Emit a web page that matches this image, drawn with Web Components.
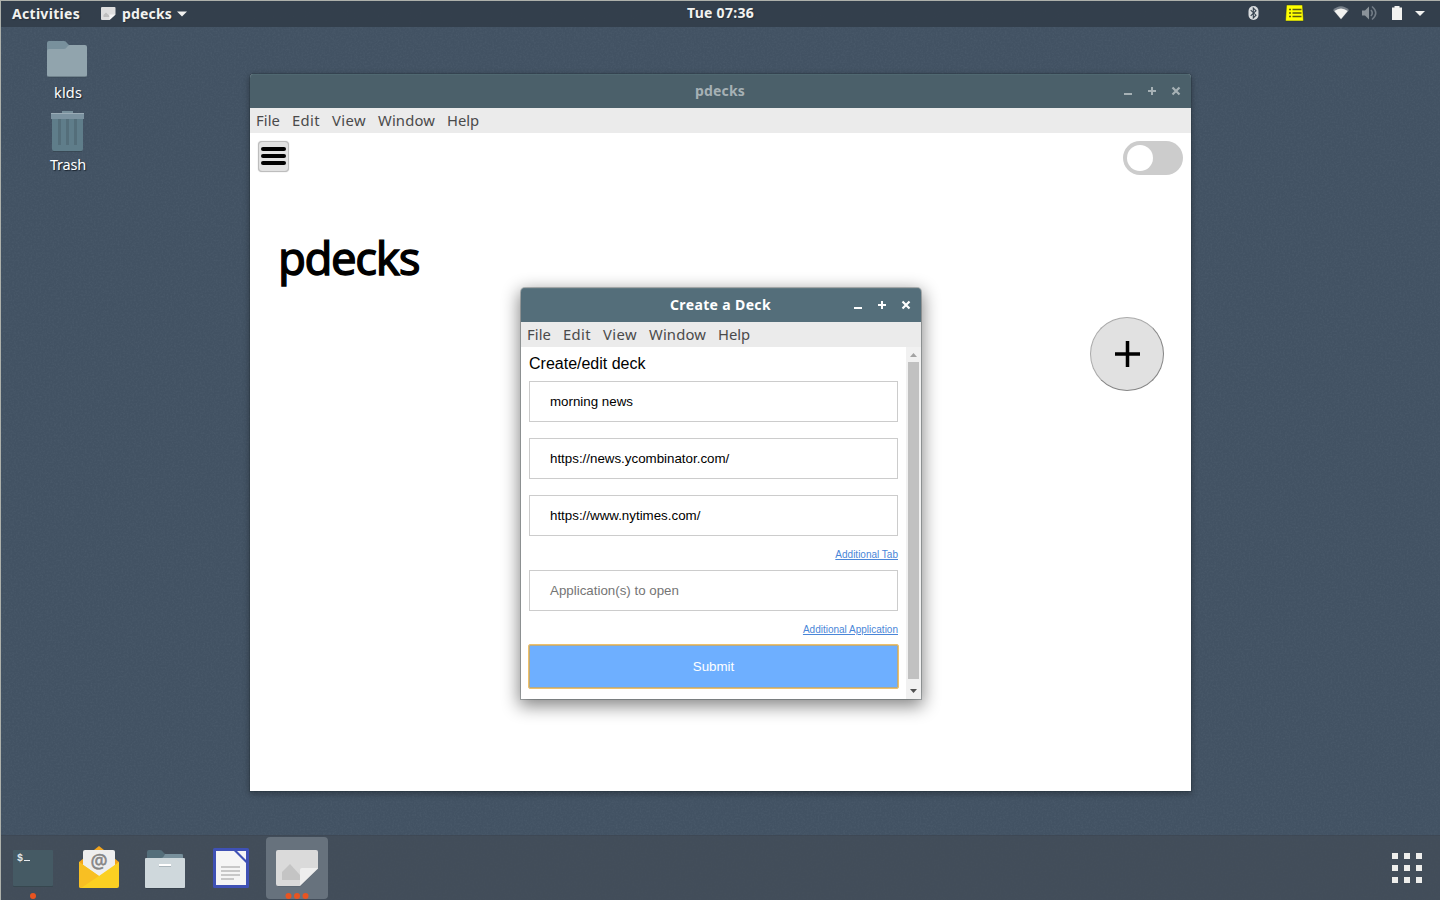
<!DOCTYPE html>
<html lang="en">
<head>
<meta charset="utf-8">
<title>pdecks desktop</title>
<style>
html,body{margin:0;width:1440px;height:900px;overflow:hidden;background:#435365}
</style>
</head>
<body>
<desk-top></desk-top>

<script>
const UI = '"Noto Sans","Open Sans",sans-serif';
function define(name, html, setup) {
  customElements.define(name, class extends HTMLElement {
    constructor() {
      super();
      this.attachShadow({mode: 'open'}).innerHTML = html;
    }
    connectedCallback() { if (setup) setup(this, this.shadowRoot); }
  });
}

/* Whole screen: top bar, work area, dock */
define('desk-top', `<style>
:host{display:flex;flex-direction:column;box-sizing:border-box;width:1440px;height:900px;position:relative;background:#425263;font-family:${UI}}
.grain{position:absolute;inset:0;width:100%;height:100%}
main{flex:1;position:relative}
.icons{display:flex;flex-direction:column;padding:12px 0 0 32px;width:72px}
app-window{position:absolute}
.edge{position:absolute;inset:0;border-top:1px solid #aeb1ab;border-left:1px solid #aeb1ab;pointer-events:none}
</style>
<svg class="grain"><filter id="g" x="0" y="0" width="100%" height="100%"><feTurbulence type="fractalNoise" baseFrequency=".55" numOctaves="2" seed="4"/><feColorMatrix values="0 0 0 0 .6  0 0 0 0 .7  0 0 0 0 .8  .5 0 0 0 -.19"/></filter><rect width="1440" height="900" filter="url(#g)" opacity=".2"/></svg>
<top-bar></top-bar>
<main>
  <div class="icons">
    <desk-icon><svg slot="art" width="72" height="42" viewBox="0 0 72 42"><path d="M15 4q0-2 2-2h15q2 0 3 2l2 2h15v8H15z" fill="#78909c"/><path d="M15 12q0-2 2-2h15q2 0 3-2l1-1q1-1 2-1h15q2 0 2 2v28q0 2-2 2H17q-2 0-2-2z" fill="#91a4ad"/><path d="M16 38h38" stroke="#374653" opacity=".7"/></svg><fit-text w="28" style="font-size:14.5px">klds</fit-text></desk-icon>
    <desk-icon><svg slot="art" width="72" height="42" viewBox="0 0 72 42"><path d="M30 0h11v4H30z" fill="#78909c"/><path d="M20 8h31v30q0 2-2 2H22q-2 0-2-2z" fill="#5f7d8a"/><path d="M27.500 8v26M35.500 8v26M43.500 8v26" stroke="#546e7a" stroke-width="3"/><path d="M19 2h33v6H19z" fill="#7b92a0"/><path d="M19 2.500h33" stroke="#9aabb6"/><path d="M21 40.500h29" stroke="#35444f" opacity=".7"/></svg><fit-text w="36" style="font-size:14.500px">Trash</fit-text></desk-icon>
  </div>
  <app-window inactive style="left:250px;top:47px;width:941px;height:717px">
    <fit-text slot="title" w="50" style="font-size:14px;font-weight:700">pdecks</fit-text>
    <deck-home></deck-home>
  </app-window>
  <app-window style="left:521px;top:261px;width:400px;height:411px">
    <fit-text slot="title" w="101" style="font-size:14px;font-weight:700">Create a Deck</fit-text>
    <deck-form></deck-form>
  </app-window>
</main>
<task-dock></task-dock>
<div class="edge"></div>`);

define('top-bar', `<style>
:host{display:flex;position:relative;height:27px;box-sizing:border-box;background:rgba(48,59,71,.82);align-items:center;color:#f2f2f0;padding-left:12px;font-weight:700;font-size:14px;line-height:27px;text-shadow:1px 1px 1px #26303a}
.left{display:flex;align-items:center;width:675px}
.app{display:flex;align-items:center;margin-left:21px}
.app fit-text{margin:0 5px 0 6px}
svg{display:block}
.clock{margin-top:-2px}
.tray{margin-left:auto}
</style>
<div class="left"><fit-text w="68">Activities</fit-text>
<div class="app"><svg width="15" height="14" viewBox="0 0 15 14"><path d="M0 1q0-1 1-1h12.500q1 0 1 1v6.500L8.500 13H1q-1 0-1-1z" fill="#dedede"/><path d="M2.500 10V8L5 5.500 8.500 9v1z" fill="#bebebe"/><path d="M8.500 13V7.500h6z" fill="#f6f6f6"/></svg><fit-text w="50">pdecks</fit-text><svg width="10" height="6"><path d="M0 .5h10L5 5.500z" fill="#f2f2f0"/></svg></div></div>
<fit-text class="clock" w="67">Tue 07:36</fit-text>
<svg class="tray" width="210" height="27" viewBox="0 0 210 27">
<rect x="18.500" y="6" width="10" height="14" rx="5" fill="#d9dcde"/><path d="M20.700 10.200l5.300 5-2.700 2.800V8l2.700 2.700-5.300 5.200" fill="none" stroke="#34414e" stroke-width="1.100"/>
<path d="M56.500 5h16l1 16h-18z" fill="#ff0" stroke="#26302b" stroke-width=".5"/><path d="M59 9.500h2M62.500 9.500h9M59 13h2M62.500 13h9M59 16.500h2M62.500 16.500h9" stroke="#5a5a12" stroke-width="1.300"/>
<path d="M103 10q8-7.500 16 0l-8 9.500z" fill="#78818a"/><path d="M104.300 11q6.700-5 13.400 0L111 19z" fill="#f2f2f0"/>
<path d="M132 10.500h3l4-4v13l-4-4h-3z" fill="#8b939a"/><path d="M141 10q2.500 3 0 6M142 6.500q7.500 6.500 0 13" fill="none" stroke="#727c86" stroke-width="1.600"/>
<path d="M162 7.500h2.500V6h5v1.500h2.500V20h-10z" fill="#f2f2f0"/><path d="M185 11h10l-5 5z" fill="#f2f2f0"/></svg>`);

define('desk-icon', `<style>
:host{display:flex;flex-direction:column;align-items:center;height:72px;width:72px;color:#fff;line-height:20px;text-shadow:1px 1px 1px #18212b}
slot{display:block}::slotted(svg){display:block}.label{margin-top:1px}
</style><slot name="art"></slot><div class="label"><slot></slot></div>`);

define('app-window', `<style>
:host{display:flex;flex-direction:column;border-radius:4px 4px 0 0;background:#fff;box-shadow:0 0 0 1px rgba(20,35,40,.28),0 5px 17px 2px rgba(0,0,0,.48)}
:host([inactive]){box-shadow:0 0 0 1px rgba(20,35,40,.2),0 2px 6px 1px rgba(0,0,0,.28)}
header{position:relative;box-sizing:border-box;height:34px;padding:0 1px 2px 0;border-radius:4px 4px 0 0;background:#546e7a;box-shadow:inset 0 1px #5f7781;color:#fff;display:flex;align-items:center;justify-content:center}
:host([inactive]) header{background:#4b606a;box-shadow:inset 0 1px #506871;color:#a6b1b5}
svg{position:absolute;right:4px;top:10px}
nav{display:flex;gap:12px;height:25px;padding-left:6px;background:#ebebeb;color:#4a4a4a;font-size:14.800px;line-height:25px}
.body{flex:1;display:flex;min-height:0}
::slotted(deck-home),::slotted(deck-form){flex:1}
</style>
<header><slot name="title"></slot><svg width="64" height="14" fill="none" stroke="currentColor"><path d="M1 10h8M25 7h8M29 3v8" stroke-width="2"/><path d="M49.500 3.500l7 7M56.500 3.500l-7 7" stroke-width="2.200"/></svg></header>
<nav><fit-text w="24">File</fit-text><fit-text w="28">Edit</fit-text><fit-text w="34">View</fit-text><fit-text w="57">Window</fit-text><fit-text w="32">Help</fit-text></nav>
<div class="body"><slot></slot></div>`);

define('deck-home', `<style>
:host{display:flex;flex-direction:column;padding:8px 8px 0;color:#000}
.row{display:flex;justify-content:space-between;height:34px}
.burger{box-sizing:border-box;width:31px;height:31px;padding-bottom:2px;border:1px solid #bdbdbd;border-radius:4px;background:#e1e1e1;display:flex;flex-direction:column;align-items:center;justify-content:center;gap:3px;box-shadow:0 0 1px #aaa}
.burger i{width:25px;height:4px;border-radius:2px;background:#000}
.toggle{box-sizing:border-box;width:60px;height:34px;border-radius:17px;background:#ccc;padding:4px}
.toggle i{display:block;width:26px;height:26px;border-radius:50%;background:#fff}
h1{margin:49px 0 0 20px;font-size:45.500px;line-height:66px;font-weight:400;-webkit-text-stroke:1.300px #000}
.add{align-self:flex-end;margin:27px 19px 0 0;box-sizing:border-box;width:74px;height:74px;border-radius:50%;background:#e1e1e1;border:1px solid #aaa;border-right-color:#858585;border-bottom-color:#858585;display:flex;align-items:center;justify-content:center}
.add svg{margin-left:1px}
</style>
<div class="row"><div class="burger"><i></i><i></i><i></i></div><div class="toggle"><i></i></div></div>
<h1><fit-text w="141">pdecks</fit-text></h1>
<div class="add"><svg width="27" height="26"><path d="M1 13h25M13.500 0v26" stroke="#000" stroke-width="3.500"/></svg></div>`);

define('deck-form', `<style>
:host{display:flex;font-family:"Liberation Sans",Arial,sans-serif;color:#000}
form{flex:1;padding:8px 8px 0;display:flex;flex-direction:column}
h2{margin:0 0 8px;font-size:16px;line-height:18px;font-weight:400}
.more{align-self:flex-end;height:12px;line-height:12px;font-size:10px;color:#4a86d8;text-decoration:underline;margin:-3px 0 9px}
button{margin:0;border:0;height:43px;border-radius:1px;background:#6eafff;color:#fff;font:13.333px "Liberation Sans",Arial,sans-serif;outline:1px solid #efc069;box-shadow:inset 0 0 0 1px #b5aa86}
</style>
<form onsubmit="return false"><h2>Create/edit deck</h2>
<text-field>morning news</text-field><text-field>https://news.ycombinator.com/</text-field><text-field>https://www.nytimes.com/</text-field>
<a class="more">Additional Tab</a><text-field hint>Application(s) to open</text-field><a class="more">Additional Application</a>
<button>Submit</button></form><scroll-bar></scroll-bar>`);

define('text-field', `<style>:host{display:block;box-sizing:border-box;height:41px;margin-bottom:16px;border:1px solid #ccc;padding:0 20px;font-size:13.333px;line-height:39px;color:#000}:host([hint]){color:#757575}</style><slot></slot>`);

define('scroll-bar', `<style>:host{display:flex;flex-direction:column;align-items:center;width:15px;background:#f1f1f1}i{width:11px;height:317px;background:#c1c1c1}svg{display:block}.end{margin-top:auto}</style>
<svg width="15" height="15"><path d="M4 10l3.500-4L11 10z" fill="#a3a3a3"/></svg><i></i><svg class="end" width="15" height="17"><path d="M4 7h7l-3.500 4z" fill="#505050"/></svg>`);

define('task-dock', `<style>
:host{display:flex;position:relative;height:65px;box-sizing:border-box;background:rgba(66,76,86,.74);padding:2px 18px 0 2px;gap:4px;box-shadow:inset 0 1px rgba(40,50,60,.15)}
.active{background:#67727d;border-radius:4px;height:62px}
svg{display:block}.grid{margin-left:auto}
text{font:700 10px "Liberation Mono",monospace}
</style>
<svg width="62" height="62"><rect x="11" y="14" width="40" height="36" rx="1" fill="#37474f"/><rect x="11" y="13" width="40" height="36" rx="1" fill="#455a64"/><text x="15" y="24" fill="#e4eaed">$</text><path d="M22 23.500h6" stroke="#e4eaed"/><circle cx="31" cy="59" r="3" fill="#e95420"/></svg>
<svg width="62" height="62"><path d="M11 25L31 9l20 16v4H11z" fill="#f2a51d"/><path d="M15 15q0-2 2-2h28q2 0 2 2v27H15z" fill="#eee"/><text x="31" y="31" text-anchor="middle" fill="#858585" stroke="#858585" stroke-width=".5" style="font:400 19px 'Noto Sans',sans-serif">@</text><path d="M11 25l20 14 20-14v24q0 2-2 2H13q-2 0-2-2z" fill="#fbd022"/><path d="M11 25l20 14-18 12q-2 0-2-2z" fill="#f8bf23"/></svg>
<svg width="62" height="62"><path d="M13 15q0-2 2-2h11q2 0 3 2l2 2h18v8H13z" fill="#546e7a"/><path d="M13 21h14q2 0 3-2l1-2h16q2 0 2 2v7H13z" fill="#78909c"/><rect x="11" y="21" width="40" height="30" rx="1" fill="#cfd8dc"/><path d="M25 29.500h12" stroke="#aab5bb" stroke-width="1"/><path d="M25 28h12" stroke="#fff" stroke-width="2"/><path d="M12 51.500h38" stroke="#303b45" opacity=".6"/></svg>
<svg width="62" height="62"><rect x="13" y="11" width="36" height="40" rx="1.500" fill="#3f51b5"/><path d="M16 14h18l12 12v22H16z" fill="#f5f5f5"/><path d="M37 14h9v9z" fill="#f5f5f5"/><path d="M21 30h19M21 34h19M21 38h19M21 42h13" stroke="#c8c8c8" stroke-width="2"/></svg>
<svg class="active" width="62" height="62"><path d="M10 15q0-2 2-2h38q2 0 2 2v17L34 49H12q-2 0-2-2z" fill="#dadada"/><path d="M16 43v-8l8-8 10 11v5z" fill="#c4c4c4"/><path d="M34 49V33q0-2 2-2h16z" fill="#eee"/><path d="M34 49.500L52 32M12 49.500h22" stroke="#53606b" opacity=".5" fill="none"/><g fill="#e95420"><circle cx="22.500" cy="59" r="3"/><circle cx="31" cy="59" r="3"/><circle cx="39.500" cy="59" r="3"/></g></svg>
<svg class="grid" width="30" height="62"><path d="M0 19h30M0 31h30M0 43h30" stroke="#eeeeec" stroke-width="6" stroke-dasharray="6 6"/></svg>`);

/* Label tracked to a set advance width */
define('fit-text', `<style>:host{display:inline-block;white-space:nowrap}span{display:inline-block}</style><span><slot></slot></span>`, (el, root) => {
  const span = root.querySelector('span'), w = +el.getAttribute('w');
  const n = el.textContent.length;
  span.style.letterSpacing = (w - span.getBoundingClientRect().width) / n + 'px';
  el.style.width = w + 'px';
});
</script>
</body>
</html>
